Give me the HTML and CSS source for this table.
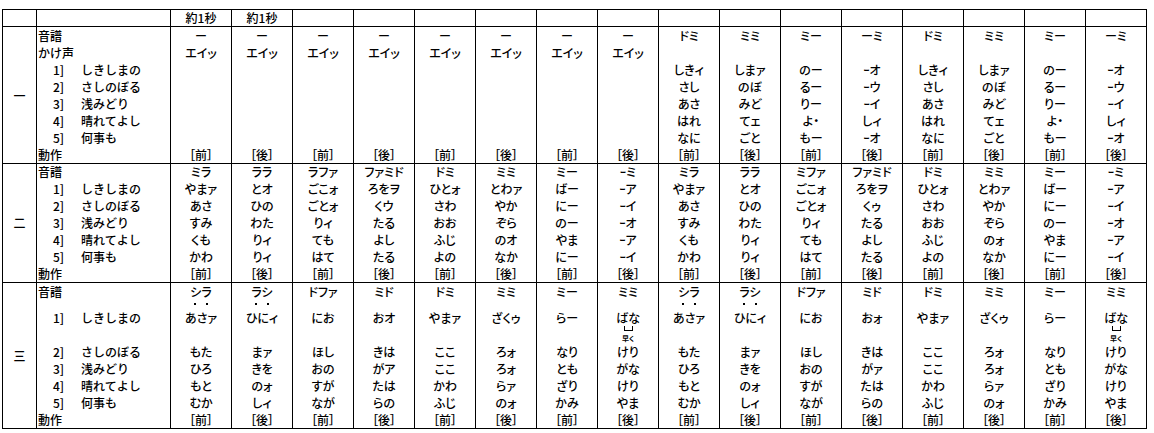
FILE: index.html
```html
<!DOCTYPE html>
<html lang="ja">
<head>
<meta charset="utf-8">
<title>譜</title>
<link rel="stylesheet" href="styles.css">
</head>
<body>
<table class="score">
<colgroup>
<col class="c-sec"><col class="c-lab">
<col class="c-d"><col class="c-d"><col class="c-d"><col class="c-d"><col class="c-d"><col class="c-d"><col class="c-d"><col class="c-d">
<col class="c-d"><col class="c-d"><col class="c-d"><col class="c-d"><col class="c-d"><col class="c-d"><col class="c-d"><col class="c-d">
</colgroup>
<tbody class="head">
<tr><td></td><td></td><td>約1秒</td><td>約1秒</td><td></td><td></td><td></td><td></td><td></td><td></td><td></td><td></td><td></td><td></td><td></td><td></td><td></td><td></td></tr>
</tbody>
<tbody class="sec">
<tr><td class="sl" rowspan="8">一</td><td class="lab">音譜</td><td>ー</td><td>ー</td><td>ー</td><td>ー</td><td>ー</td><td>ー</td><td>ー</td><td>ー</td><td>ドミ</td><td>ミミ</td><td>ミー</td><td>ーミ</td><td>ドミ</td><td>ミミ</td><td>ミー</td><td>ーミ</td></tr>
<tr><td class="lab">かけ声</td><td>エイッ</td><td>エイッ</td><td>エイッ</td><td>エイッ</td><td>エイッ</td><td>エイッ</td><td>エイッ</td><td>エイッ</td><td></td><td></td><td></td><td></td><td></td><td></td><td></td><td></td></tr>
<tr><td class="lab"><span class="no">1]</span>しきしまの</td><td></td><td></td><td></td><td></td><td></td><td></td><td></td><td></td><td>しきィ</td><td>しまァ</td><td>のー</td><td>ｰオ</td><td>しきィ</td><td>しまァ</td><td>のー</td><td>ｰオ</td></tr>
<tr><td class="lab"><span class="no">2]</span>さしのぼる</td><td></td><td></td><td></td><td></td><td></td><td></td><td></td><td></td><td>さし</td><td>のぼ</td><td>るー</td><td>ｰウ</td><td>さし</td><td>のぼ</td><td>るー</td><td>ｰウ</td></tr>
<tr><td class="lab"><span class="no">3]</span>浅みどり</td><td></td><td></td><td></td><td></td><td></td><td></td><td></td><td></td><td>あさ</td><td>みど</td><td>りー</td><td>ｰイ</td><td>あさ</td><td>みど</td><td>りー</td><td>ｰイ</td></tr>
<tr><td class="lab"><span class="no">4]</span>晴れてよし</td><td></td><td></td><td></td><td></td><td></td><td></td><td></td><td></td><td>はれ</td><td>てェ</td><td>よ・</td><td>しィ</td><td>はれ</td><td>てェ</td><td>よ・</td><td>しィ</td></tr>
<tr><td class="lab"><span class="no">5]</span>何事も</td><td></td><td></td><td></td><td></td><td></td><td></td><td></td><td></td><td>なに</td><td>ごと</td><td>もー</td><td>ｰオ</td><td>なに</td><td>ごと</td><td>もー</td><td>ｰオ</td></tr>
<tr><td class="lab">動作</td><td>［前］</td><td>［後］</td><td>［前］</td><td>［後］</td><td>［前］</td><td>［後］</td><td>［前］</td><td>［後］</td><td>［前］</td><td>［後］</td><td>［前］</td><td>［後］</td><td>［前］</td><td>［後］</td><td>［前］</td><td>［後］</td></tr>
</tbody>
<tbody class="sec">
<tr class="short"><td class="sl" rowspan="7">二</td><td class="lab">音譜</td><td>ミラ</td><td>ララ</td><td>ラファ</td><td>ファミド</td><td>ドミ</td><td>ミミ</td><td>ミー</td><td>ｰミ</td><td>ミラ</td><td>ララ</td><td>ミファ</td><td>ファミド</td><td>ドミ</td><td>ミミ</td><td>ミー</td><td>ｰミ</td></tr>
<tr><td class="lab"><span class="no">1]</span>しきしまの</td><td>やまァ</td><td>とオ</td><td>ごこォ</td><td>ろをヲ</td><td>ひとォ</td><td>とわァ</td><td>ばー</td><td>ｰア</td><td>やまァ</td><td>とオ</td><td>ごこォ</td><td>ろをヲ</td><td>ひとォ</td><td>とわァ</td><td>ばー</td><td>ｰア</td></tr>
<tr><td class="lab"><span class="no">2]</span>さしのぼる</td><td>あさ</td><td>ひの</td><td>ごとォ</td><td>くウ</td><td>さわ</td><td>やか</td><td>にー</td><td>ｰイ</td><td>あさ</td><td>ひの</td><td>ごとォ</td><td>くゥ</td><td>さわ</td><td>やか</td><td>にー</td><td>ｰイ</td></tr>
<tr><td class="lab"><span class="no">3]</span>浅みどり</td><td>すみ</td><td>わた</td><td>りィ</td><td>たる</td><td>おお</td><td>ぞら</td><td>のー</td><td>ｰオ</td><td>すみ</td><td>わた</td><td>りィ</td><td>たる</td><td>おお</td><td>ぞら</td><td>のー</td><td>ｰオ</td></tr>
<tr><td class="lab"><span class="no">4]</span>晴れてよし</td><td>くも</td><td>りィ</td><td>ても</td><td>よし</td><td>ふじ</td><td>のオ</td><td>やま</td><td>ｰア</td><td>くも</td><td>りィ</td><td>ても</td><td>よし</td><td>ふじ</td><td>のォ</td><td>やま</td><td>ｰア</td></tr>
<tr><td class="lab"><span class="no">5]</span>何事も</td><td>かわ</td><td>りィ</td><td>はて</td><td>たる</td><td>よの</td><td>なか</td><td>にー</td><td>ｰイ</td><td>かわ</td><td>りィ</td><td>はて</td><td>たる</td><td>よの</td><td>なか</td><td>にー</td><td>ｰイ</td></tr>
<tr><td class="lab">動作</td><td>［前］</td><td>［後］</td><td>［前］</td><td>［後］</td><td>［前］</td><td>［後］</td><td>［前］</td><td>［後］</td><td>［前］</td><td>［後］</td><td>［前］</td><td>［後］</td><td>［前］</td><td>［後］</td><td>［前］</td><td>［後］</td></tr>
</tbody>
<tbody class="sec">
<tr><td class="sl" rowspan="9">三</td><td class="lab">音譜</td><td>シラ</td><td>ラシ</td><td>ドファ</td><td>ミド</td><td>ドミ</td><td>ミミ</td><td>ミー</td><td>ミミ</td><td>シラ</td><td>ラシ</td><td>ドファ</td><td>ミド</td><td>ドミ</td><td>ミミ</td><td>ミー</td><td>ミミ</td></tr>
<tr class="dotrow"><td class="lab"></td><td><span class="dots"><i></i><i></i></span></td><td><span class="dots"><i></i><i></i></span></td><td></td><td></td><td></td><td></td><td></td><td></td><td><span class="dots"><i></i><i></i></span></td><td><span class="dots"><i></i><i></i></span></td><td></td><td></td><td></td><td></td><td></td><td></td></tr>
<tr><td class="lab"><span class="no">1]</span>しきしまの</td><td>あさァ</td><td>ひにィ</td><td>にお</td><td>おオ</td><td>やまァ</td><td>ざくゥ</td><td>らー</td><td>ばな</td><td>あさァ</td><td>ひにィ</td><td>にお</td><td>おォ</td><td>やまァ</td><td>ざくゥ</td><td>らー</td><td>ばな</td></tr>
<tr class="earlyrow"><td class="lab"></td><td></td><td></td><td></td><td></td><td></td><td></td><td></td><td><div class="early"><span class="brk"></span><span class="hk">早く</span></div></td><td></td><td></td><td></td><td></td><td></td><td></td><td></td><td><div class="early"><span class="brk"></span><span class="hk">早く</span></div></td></tr>
<tr><td class="lab"><span class="no">2]</span>さしのぼる</td><td>もた</td><td>まァ</td><td>ほし</td><td>きは</td><td>ここ</td><td>ろォ</td><td>なり</td><td>けり</td><td>もた</td><td>まァ</td><td>ほし</td><td>きは</td><td>ここ</td><td>ろォ</td><td>なり</td><td>けり</td></tr>
<tr><td class="lab"><span class="no">3]</span>浅みどり</td><td>ひろ</td><td>きを</td><td>おの</td><td>がア</td><td>ここ</td><td>ろォ</td><td>とも</td><td>がな</td><td>ひろ</td><td>きを</td><td>おの</td><td>がァ</td><td>ここ</td><td>ろォ</td><td>とも</td><td>がな</td></tr>
<tr><td class="lab"><span class="no">4]</span>晴れてよし</td><td>もと</td><td>のォ</td><td>すが</td><td>たは</td><td>かわ</td><td>らァ</td><td>ざり</td><td>けり</td><td>もと</td><td>のォ</td><td>すが</td><td>たは</td><td>かわ</td><td>らァ</td><td>ざり</td><td>けり</td></tr>
<tr><td class="lab"><span class="no">5]</span>何事も</td><td>むか</td><td>しィ</td><td>なが</td><td>らの</td><td>ふじ</td><td>のォ</td><td>かみ</td><td>やま</td><td>むか</td><td>しィ</td><td>なが</td><td>らの</td><td>ふじ</td><td>のォ</td><td>かみ</td><td>やま</td></tr>
<tr><td class="lab">動作</td><td>［前］</td><td>［後］</td><td>［前］</td><td>［後］</td><td>［前］</td><td>［後］</td><td>［前］</td><td>［後］</td><td>［前］</td><td>［後］</td><td>［前］</td><td>［後］</td><td>［前］</td><td>［後］</td><td>［前］</td><td>［後］</td></tr>
</tbody>
</table>
</body>
</html>
```

FILE: styles.css
```css
html, body {
  margin: 0;
  background: #ffffff;
}
body {
  padding: 9px 0 0 2px;
  font-family: "Noto Sans CJK JP", "Noto Sans", sans-serif;
  font-size: 12px;
  font-weight: 500;
  color: #000000;
  font-feature-settings: "palt";
}
.score {
  border-collapse: collapse;
  table-layout: fixed;
  width: 1145px;
  border: 1px solid #000;
}
.c-sec { width: 34px; }
.c-lab { width: 134px; }
.c-d { width: 61px; }
.score td {
  padding: 0;
  height: 17px;
  line-height: 17px;
  text-align: center;
  vertical-align: middle;
  border-left: 1px solid #000;
  border-right: 1px solid #000;
  white-space: nowrap;
  overflow: hidden;
}
.score tbody {
  border-top: 1px solid #000;
  border-bottom: 1px solid #000;
}
.head td {
  height: 16px;
  line-height: 16px;
}
.short td {
  height: 16px;
  line-height: 16px;
}
.score td.lab {
  text-align: left;
  padding-left: 1px;
  font-feature-settings: normal;
}
.score td.sl {
  font-size: 12px;
}
.no {
  display: inline-block;
  width: 26px;
  text-align: right;
  margin-right: 17px;
}
.dotrow td {
  height: 9px;
  line-height: 9px;
}
.dots {
  display: inline-flex;
  gap: 10px;
  vertical-align: top;
  padding-top: 3px;
}
.dots i {
  display: block;
  width: 2px;
  height: 2px;
  background: #000;
}
.early {
  display: flex;
  flex-direction: column;
  align-items: center;
  height: 17px;
}
.brk {
  display: block;
  width: 7px;
  height: 4px;
  border: 1px solid #000;
  border-top: 0;
}
.hk {
  font-size: 7px;
  line-height: 8px;
  margin-top: 3px;
  font-weight: bold;
}
```
